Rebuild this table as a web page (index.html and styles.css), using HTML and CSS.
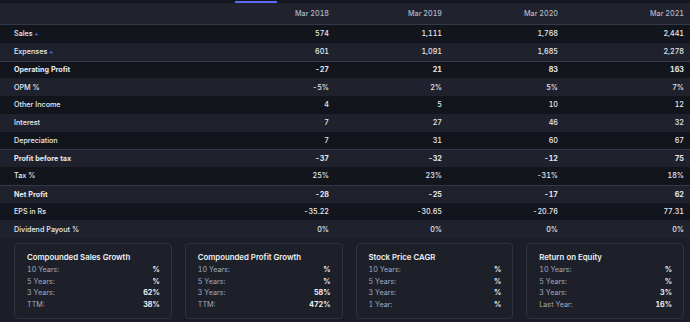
FILE: index.html
```html
<!DOCTYPE html>
<html>
<head>
<meta charset="utf-8">
<link rel="stylesheet" href="styles.css">
</head>
<body>
<div class="page">
  <div class="tabstrip"><span class="tabbar"></span></div>
  <div class="table">
    <div class="row head"><span></span><span>Mar 2018</span><span>Mar 2019</span><span>Mar 2020</span><span>Mar 2021</span></div>
    <div class="row dark"><span class="lbl">Sales <i class="plus">+</i></span><span>574</span><span>1,111</span><span>1,768</span><span>2,441</span></div>
    <div class="row light"><span class="lbl">Expenses <i class="plus">+</i></span><span>601</span><span>1,091</span><span>1,685</span><span>2,278</span></div>
    <div class="row dark strong"><span class="lbl">Operating Profit</span><span>-27</span><span>21</span><span>83</span><span>163</span></div>
    <div class="row light"><span class="lbl">OPM %</span><span>-5%</span><span>2%</span><span>5%</span><span>7%</span></div>
    <div class="row dark"><span class="lbl">Other Income</span><span>4</span><span>5</span><span>10</span><span>12</span></div>
    <div class="row light"><span class="lbl">Interest</span><span>7</span><span>27</span><span>46</span><span>32</span></div>
    <div class="row dark"><span class="lbl">Depreciation</span><span>7</span><span>31</span><span>60</span><span>67</span></div>
    <div class="row light strong"><span class="lbl">Profit before tax</span><span>-37</span><span>-32</span><span>-12</span><span>75</span></div>
    <div class="row dark"><span class="lbl">Tax %</span><span>25%</span><span>23%</span><span>-31%</span><span>18%</span></div>
    <div class="row light strong"><span class="lbl">Net Profit</span><span>-28</span><span>-25</span><span>-17</span><span>62</span></div>
    <div class="row dark"><span class="lbl">EPS in Rs</span><span>-35.22</span><span>-30.65</span><span>-20.76</span><span>77.31</span></div>
    <div class="row light"><span class="lbl">Dividend Payout %</span><span>0%</span><span>0%</span><span>0%</span><span>0%</span></div>
  </div>
  <div class="cards">
    <div class="card">
      <div class="ctitle">Compounded Sales Growth</div>
      <div class="crow"><span>10 Years:</span><b>%</b></div>
      <div class="crow"><span>5 Years:</span><b>%</b></div>
      <div class="crow"><span>3 Years:</span><b>62%</b></div>
      <div class="crow"><span>TTM:</span><b>38%</b></div>
    </div>
    <div class="card">
      <div class="ctitle">Compounded Profit Growth</div>
      <div class="crow"><span>10 Years:</span><b>%</b></div>
      <div class="crow"><span>5 Years:</span><b>%</b></div>
      <div class="crow"><span>3 Years:</span><b>58%</b></div>
      <div class="crow"><span>TTM:</span><b>472%</b></div>
    </div>
    <div class="card">
      <div class="ctitle">Stock Price CAGR</div>
      <div class="crow"><span>10 Years:</span><b>%</b></div>
      <div class="crow"><span>5 Years:</span><b>%</b></div>
      <div class="crow"><span>3 Years:</span><b>%</b></div>
      <div class="crow"><span>1 Year:</span><b>%</b></div>
    </div>
    <div class="card">
      <div class="ctitle">Return on Equity</div>
      <div class="crow"><span>10 Years:</span><b>%</b></div>
      <div class="crow"><span>5 Years:</span><b>%</b></div>
      <div class="crow"><span>3 Years:</span><b>3%</b></div>
      <div class="crow"><span>Last Year:</span><b>16%</b></div>
    </div>
  </div>
</div>
</body>
</html>
```

FILE: styles.css
```css
html, body {
  margin: 0;
  padding: 0;
  background: #1b1e28;
}
body {
  width: 690px;
  height: 322px;
  overflow: hidden;
  font-family: Inter, "Noto Sans", sans-serif;
  font-size: 7.2px;
  font-weight: 500;
  font-variant-numeric: tabular-nums;
  color: #e8eaf0;
}
.page {
  display: flex;
  flex-direction: column;
}
.tabstrip {
  height: 3px;
  background: #14161d;
  display: flex;
  padding-left: 235px;
}
.tabbar {
  width: 42px;
  height: 1.5px;
  margin-top: 1px;
  background: #5b6cf2;
}
.table {
  display: flex;
  flex-direction: column;
}
.row {
  display: grid;
  grid-template-columns: 1fr 120px 113px 116px 126px;
  padding: 0 6px 0 14px;
  align-items: center;
  height: 17.75px;
  box-sizing: border-box;
}
.row span {
  text-align: right;
  white-space: nowrap;
}
.row span.lbl {
  text-align: left;
}
.head {
  height: 22px;
  background: #20232e;
  color: #b3b9c8;
  border-bottom: 1px solid #353948;
}
.dark {
  background: #13151c;
}
.light {
  background: #1f222c;
}
.strong {
  font-weight: 700;
  border-top: 1.5px solid #343847;
}
.plus {
  font-style: normal;
  color: #5b6cf2;
  font-size: 6px;
  font-weight: 700;
}
.cards {
  display: grid;
  grid-template-columns: repeat(4, 1fr);
  gap: 13px;
  padding: 5px 6px 0 14px;
}
.card {
  height: 76px;
  box-sizing: border-box;
  border: 1px solid #2e3241;
  border-radius: 4px;
  background: #1d2029;
  padding: 7px 11px 0 12px;
  display: flex;
  flex-direction: column;
}
.ctitle {
  font-size: 7.8px;
  font-weight: 600;
  color: #f0f2f6;
  height: 13px;
  line-height: 13px;
}
.crow {
  display: flex;
  justify-content: space-between;
  height: 11.6px;
  line-height: 11.6px;
}
.crow span {
  color: #a2a9bc;
  font-weight: 400;
}
.crow b {
  font-weight: 700;
  color: #eef0f4;
}
```
